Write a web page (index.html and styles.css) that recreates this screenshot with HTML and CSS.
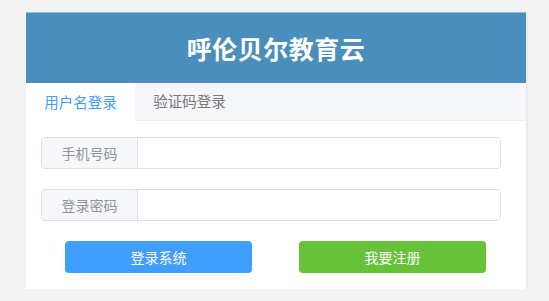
FILE: index.html
```html
<!DOCTYPE html>
<html lang="zh-CN">
<head>
<meta charset="utf-8">
<title>呼伦贝尔教育云</title>
<link rel="stylesheet" href="styles.css">
</head>
<body>
<div class="card">
  <div class="header">呼伦贝尔教育云</div>
  <div class="tabs">
    <div class="tab active">用户名登录</div>
    <div class="tab">验证码登录</div>
  </div>
  <div class="form">
    <div class="group">
      <div class="label">手机号码</div>
      <input class="field" type="text">
    </div>
    <div class="group">
      <div class="label">登录密码</div>
      <input class="field" type="password">
    </div>
    <div class="actions">
      <button class="btn primary">登录系统</button>
      <button class="btn success">我要注册</button>
    </div>
  </div>
</div>
</body>
</html>
```
FILE: styles.css
```css
* { box-sizing: border-box; }
html, body { margin: 0; }
body {
  background: #f3f3f3;
  padding: 12px 0 0 26px;
  font-family: "Noto Sans CJK SC", "Noto Sans", sans-serif;
}
.card {
  width: 500px;
  background: #fff;
  box-shadow: 1px 1px 2px rgba(0,0,0,0.06);
}
.header {
  height: 71px;
  background: #4a8fbb;
  border-top: 1px solid #86bde0;
  color: #fff;
  font-size: 25px;
  font-weight: 700;
  display: flex;
  align-items: center;
  justify-content: center;
  letter-spacing: 0.5px;
}
.tabs {
  height: 38px;
  display: flex;
  background: #f5f7fa;
  border-bottom: 1px solid #eef0f4;
}
.tab {
  width: 109px;
  display: flex;
  align-items: center;
  justify-content: center;
  font-size: 14.5px;
  color: #777;
  padding-bottom: 2px;
}
.tab.active {
  background: #fff;
  color: #409eff;
  height: 39px;
}
.form {
  padding: 16px 25px 16px 15px;
}
.group {
  display: flex;
  height: 32px;
  border: 1px solid #dcdfe6;
  border-radius: 4px;
  overflow: hidden;
  margin-bottom: 20px;
}
.label {
  width: 96px;
  background: #f5f7fa;
  border-right: 1px solid #dcdfe6;
  color: #909399;
  font-size: 14px;
  display: flex;
  align-items: center;
  justify-content: center;
}
.field {
  flex: 1;
  border: 0;
  outline: none;
  background: #fff;
}
.actions {
  display: flex;
  gap: 47px;
  padding-left: 24px;
}
.btn {
  width: 187px;
  height: 32px;
  border: 0;
  border-radius: 4px;
  color: #fff;
  font-family: inherit;
  font-size: 14px;
  padding: 0;
}
.btn.primary { background: #409eff; }
.btn.success { background: #67c23a; }
```
